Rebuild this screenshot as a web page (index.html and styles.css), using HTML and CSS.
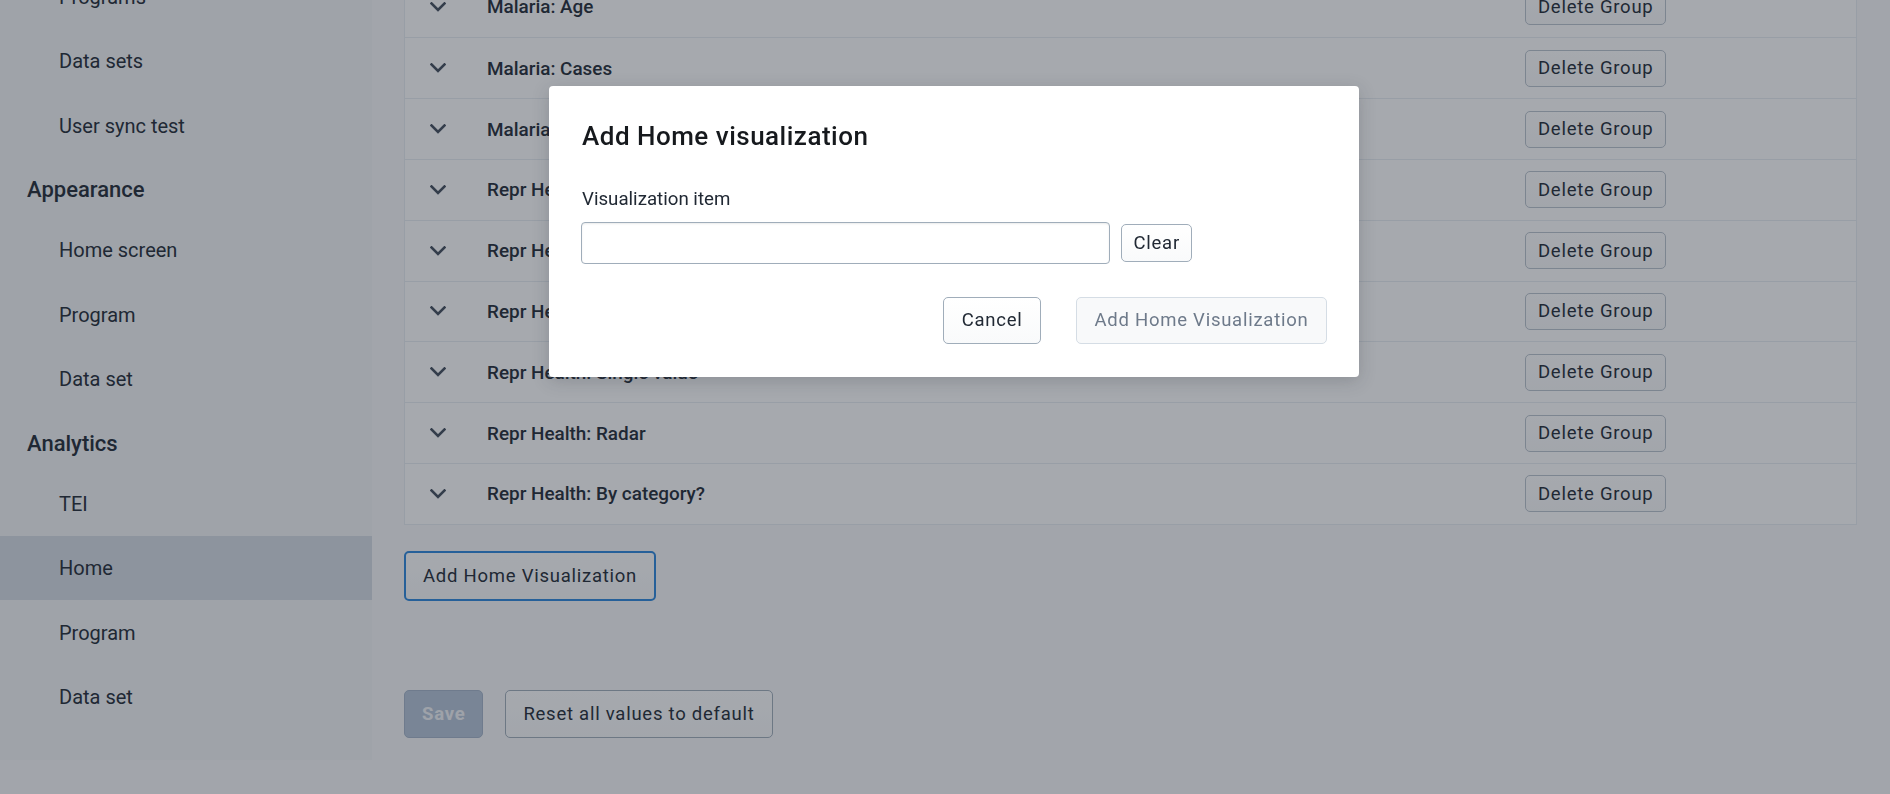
FILE: index.html
```html
<!DOCTYPE html>
<html lang="en">
<head>
<meta charset="utf-8">
<title>Android Settings - Home visualization</title>
<link rel="stylesheet" href="styles.css">
</head>
<body>
<div class="app">
  <nav class="sidebar">
    <div class="nav-item">Programs</div>
    <div class="nav-item">Data sets</div>
    <div class="nav-item">User sync test</div>
    <div class="nav-heading">Appearance</div>
    <div class="nav-item">Home screen</div>
    <div class="nav-item">Program</div>
    <div class="nav-item">Data set</div>
    <div class="nav-heading">Analytics</div>
    <div class="nav-item">TEI</div>
    <div class="nav-item active">Home</div>
    <div class="nav-item">Program</div>
    <div class="nav-item">Data set</div>
  </nav>
  <main class="main">
    <div class="group-list">
      <div class="group-row">
        <svg class="chevron" viewBox="0 0 16 10" width="16" height="10"><path d="M1.5 1.5 L8 8 L14.5 1.5"/></svg>
        <span class="group-title">Malaria: Age</span>
        <button class="btn btn-small">Delete Group</button>
      </div>
      <div class="group-row">
        <svg class="chevron" viewBox="0 0 16 10" width="16" height="10"><path d="M1.5 1.5 L8 8 L14.5 1.5"/></svg>
        <span class="group-title">Malaria: Cases</span>
        <button class="btn btn-small">Delete Group</button>
      </div>
      <div class="group-row">
        <svg class="chevron" viewBox="0 0 16 10" width="16" height="10"><path d="M1.5 1.5 L8 8 L14.5 1.5"/></svg>
        <span class="group-title">Malaria: Deaths</span>
        <button class="btn btn-small">Delete Group</button>
      </div>
      <div class="group-row">
        <svg class="chevron" viewBox="0 0 16 10" width="16" height="10"><path d="M1.5 1.5 L8 8 L14.5 1.5"/></svg>
        <span class="group-title">Repr Health: Births</span>
        <button class="btn btn-small">Delete Group</button>
      </div>
      <div class="group-row">
        <svg class="chevron" viewBox="0 0 16 10" width="16" height="10"><path d="M1.5 1.5 L8 8 L14.5 1.5"/></svg>
        <span class="group-title">Repr Health: Coverage</span>
        <button class="btn btn-small">Delete Group</button>
      </div>
      <div class="group-row">
        <svg class="chevron" viewBox="0 0 16 10" width="16" height="10"><path d="M1.5 1.5 L8 8 L14.5 1.5"/></svg>
        <span class="group-title">Repr Health: Pivot table</span>
        <button class="btn btn-small">Delete Group</button>
      </div>
      <div class="group-row">
        <svg class="chevron" viewBox="0 0 16 10" width="16" height="10"><path d="M1.5 1.5 L8 8 L14.5 1.5"/></svg>
        <span class="group-title">Repr Health: Single value</span>
        <button class="btn btn-small">Delete Group</button>
      </div>
      <div class="group-row">
        <svg class="chevron" viewBox="0 0 16 10" width="16" height="10"><path d="M1.5 1.5 L8 8 L14.5 1.5"/></svg>
        <span class="group-title">Repr Health: Radar</span>
        <button class="btn btn-small">Delete Group</button>
      </div>
      <div class="group-row">
        <svg class="chevron" viewBox="0 0 16 10" width="16" height="10"><path d="M1.5 1.5 L8 8 L14.5 1.5"/></svg>
        <span class="group-title">Repr Health: By category?</span>
        <button class="btn btn-small">Delete Group</button>
      </div>
    </div>
    <div class="add-row">
      <button class="btn btn-large btn-focus">Add Home Visualization</button>
    </div>
    <div class="footer-actions">
      <button class="btn btn-large btn-primary-disabled">Save</button>
      <button class="btn btn-large">Reset all values to default</button>
    </div>
  </main>
</div>

<div class="overlay"></div>

<div class="modal" role="dialog" aria-labelledby="modal-title">
  <h2 class="modal-title" id="modal-title">Add Home visualization</h2>
  <label class="field-label" for="vis-item">Visualization item</label>
  <div class="field-row">
    <input class="field-input" id="vis-item" type="text">
    <button class="btn btn-clear">Clear</button>
  </div>
  <div class="modal-actions">
    <button class="btn btn-large">Cancel</button>
    <button class="btn btn-large btn-disabled">Add Home Visualization</button>
  </div>
</div>
</body>
</html>
```

FILE: styles.css
```css
* { box-sizing: border-box; }

html, body {
  margin: 0;
  padding: 0;
  height: 100%;
  overflow: hidden;
}

body {
  background: #f8f9fa;
  font-family: Roboto, "Liberation Sans", Arial, sans-serif;
  color: #212934;
}

.app {
  display: flex;
  align-items: flex-start;
  margin-top: -60px;
}

/* Sidebar */
.sidebar {
  width: 372px;
  flex: 0 0 372px;
  background: #f3f5f7;
  padding: 24.25px 0 30.75px;
  display: flex;
  flex-direction: column;
}

.nav-item {
  height: 64.5px;
  display: flex;
  align-items: center;
  padding-left: 59px;
  font-size: 20px;
  color: #212934;
}

.nav-item.active {
  background: #d5dde5;
}

.nav-heading {
  height: 60px;
  padding: 19.25px 0 14.75px 27px;
  font-size: 22px;
  line-height: 26px;
  font-weight: 500;
  color: #212934;
}

/* Main */
.main {
  flex: 1;
  padding: 35.6px 33px 0 32px;
  display: flex;
  flex-direction: column;
}

.group-list {
  border: 1px solid #e8edf2;
  background: #ffffff;
}

.group-row {
  height: 60.8px;
  display: flex;
  align-items: center;
  padding: 0 190px 0 25px;
  border-top: 1px solid #e8edf2;
}

.group-row:first-child {
  border-top: none;
}

.chevron {
  flex: 0 0 16px;
  margin-right: 41px;
}

.chevron path {
  fill: none;
  stroke: #404b5a;
  stroke-width: 2.6;
  stroke-linecap: square;
}

.group-title {
  flex: 1;
  font-size: 18.9px;
  font-weight: 500;
  color: #212934;
}

/* Buttons */
.btn {
  font-family: Roboto, "Liberation Sans", Arial, sans-serif;
  font-size: 18.5px;
  letter-spacing: 0.75px;
  color: #212934;
  background: linear-gradient(180deg, #ffffff 0%, #f9fafb 100%);
  border: 1px solid #a0adba;
  border-radius: 5px;
  display: inline-flex;
  align-items: center;
  justify-content: center;
  white-space: nowrap;
}

.btn-small {
  height: 37px;
  padding: 0 11.5px;
  border-color: #b9c3cd;
}

.btn-large {
  height: 48px;
  padding: 0 17px;
}

.btn-focus {
  height: 50px;
  border: 2px solid #2a85dc;
}

.btn-primary-disabled {
  background: #b5c4d8;
  border-color: #a3b3c8;
  color: #f2f4f7;
  font-weight: 700;
}

.add-row {
  margin-top: 26px;
  display: flex;
}

.footer-actions {
  margin-top: 89px;
  display: flex;
  gap: 22px;
}

/* Overlay and modal */
.overlay {
  position: fixed;
  inset: 0;
  background: rgba(33, 41, 52, 0.4);
}

.modal {
  position: fixed;
  left: 549px;
  top: 86px;
  width: 810px;
  height: 291px;
  background: #ffffff;
  border-radius: 4px;
  box-shadow: 0 4px 18px rgba(33, 41, 52, 0.2);
  padding: 35px 32px 0 32px;
  display: flex;
  flex-direction: column;
}

.modal-title {
  margin: 0 0 37px 1px;
  font-size: 26px;
  letter-spacing: 0.5px;
  line-height: 30px;
  font-weight: 500;
  color: #16191d;
}

.field-label {
  font-size: 18.7px;
  line-height: 22px;
  color: #212934;
  margin: 0 0 11.5px 1px;
}

.field-row {
  display: flex;
  align-items: center;
  gap: 11px;
}

.field-input {
  width: 529px;
  height: 42px;
  border: 1px solid #a0adba;
  border-radius: 4px;
  background: #ffffff;
  box-shadow: inset 0 1px 2px rgba(48, 54, 60, 0.1);
  font-family: Roboto, "Liberation Sans", Arial, sans-serif;
  font-size: 18.5px;
  padding: 0 14px;
}

.btn-clear {
  height: 38px;
  padding: 0 11.5px;
}

.modal-actions {
  margin-top: 33px;
  display: flex;
  justify-content: flex-end;
  gap: 35px;
}

.modal-actions .btn {
  height: 47px;
  padding: 0 17.5px;
}

.btn-disabled {
  color: #6e7a8a;
  border-color: #d5dde5;
  background: #f8f9fa;
}
```
